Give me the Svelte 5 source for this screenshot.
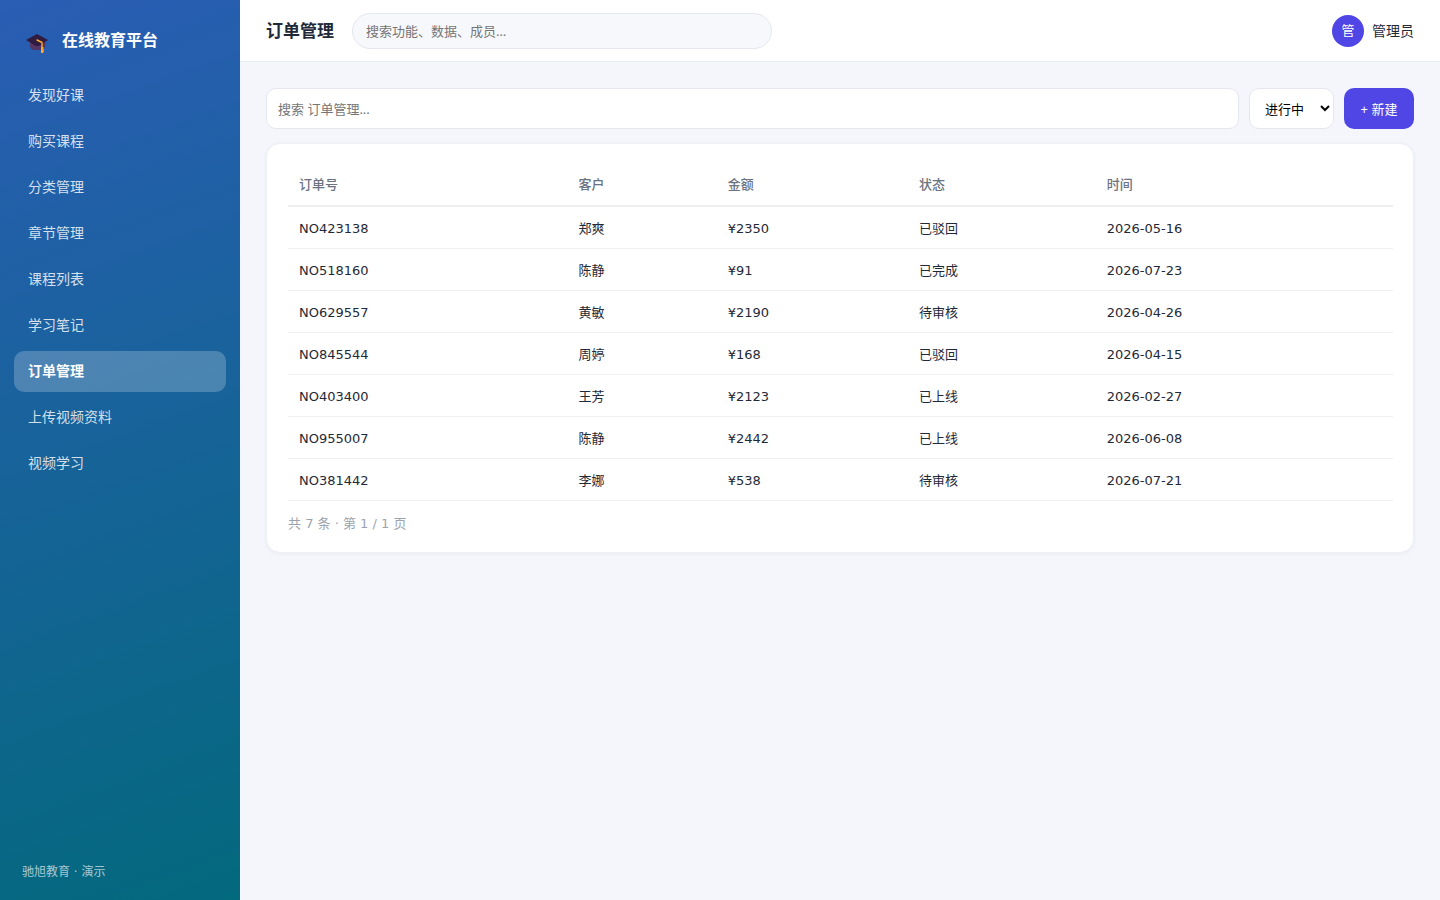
<script>
  const menu = ['发现好课', '购买课程', '分类管理', '章节管理', '课程列表', '学习笔记', '订单管理', '上传视频资料', '视频学习'];
  const active = '订单管理';
  const columns = ['订单号', '客户', '金额', '状态', '时间'];
  const orders = [
    ['NO423138', '郑爽', '¥2350', '已驳回', '2026-05-16'],
    ['NO518160', '陈静', '¥91', '已完成', '2026-07-23'],
    ['NO629557', '黄敏', '¥2190', '待审核', '2026-04-26'],
    ['NO845544', '周婷', '¥168', '已驳回', '2026-04-15'],
    ['NO403400', '王芳', '¥2123', '已上线', '2026-02-27'],
    ['NO955007', '陈静', '¥2442', '已上线', '2026-06-08'],
    ['NO381442', '李娜', '¥538', '待审核', '2026-07-21']
  ];
</script>

<div class="layout">
  <aside class="sidebar">
    <div class="brand">
      <svg class="logo" viewBox="0 0 24 24" aria-hidden="true">
        <path d="M4 11v5q0 3 4 4h7q4-1 4-4v-5z" fill="#533566" />
        <path d="M0 10 11 4l11 6-9 6h-3z" fill="#2f1c40" />
        <path d="M11 10l5 2.500V18" fill="none" stroke="#fbab2c" stroke-width="1.400" stroke-linejoin="round" stroke-linecap="round" />
        <path d="M15 17h2.500v3l.5 1-1 2h-2z" fill="#fbab2c" />
      </svg>
      <span>在线教育平台</span>
    </div>
    <nav>
      {#each menu as item}
        <a href="#top" class:active={item === active} aria-current={item === active ? 'page' : undefined}>{item}</a>
      {/each}
    </nav>
    <footer>驰旭教育 · 演示</footer>
  </aside>

  <div class="content">
    <header class="topbar">
      <h1>订单管理</h1>
      <input class="global-search" type="search" aria-label="搜索功能" placeholder="搜索功能、数据、成员…" />
      <div class="user">
        <span class="avatar">管</span>
        <span>管理员</span>
      </div>
    </header>

    <main>
      <div class="toolbar">
        <input type="text" aria-label="搜索订单" placeholder="搜索 订单管理..." />
        <select aria-label="状态">
          <option>进行中</option>
        </select>
        <button type="button">+ 新建</button>
      </div>

      <section class="card">
        <table>
          <colgroup>
            <col class="c-id" /><col class="c-name" /><col class="c-sum" /><col class="c-state" /><col />
          </colgroup>
          <thead>
            <tr>
              {#each columns as column}<th scope="col">{column}</th>{/each}
            </tr>
          </thead>
          <tbody>
            {#each orders as order}
              <tr>
                {#each order as cell}<td>{cell}</td>{/each}
              </tr>
            {/each}
          </tbody>
        </table>
        <p class="pager">共 7 条 · 第 1 / 1 页</p>
      </section>
    </main>
  </div>
</div>

<style>
  :global(body) {
    margin: 0;
    background: #f5f6fb;
  }
  .layout {
    display: flex;
    min-height: 100vh;
    color: #1f2937;
    font: 14px/20px "DejaVu Sans", "Noto Sans CJK SC", sans-serif;
  }
  .layout * {
    box-sizing: border-box;
  }
  .sidebar {
    display: flex;
    flex-direction: column;
    flex: 0 0 240px;
    padding: 21px 14px 19px;
    color: #fff;
    background: linear-gradient(160deg, #2a5db4, #03697d);
  }
  .brand {
    display: flex;
    align-items: center;
    gap: 12px;
    height: 40px;
    margin-bottom: 14px;
    padding-left: 12px;
    font-size: 16px;
    font-weight: 700;
  }
  .logo {
    width: 24px;
    height: 24px;
    margin-top: 2px;
  }
  nav {
    display: flex;
    flex-direction: column;
    gap: 5px;
  }
  nav a {
    padding: 10px 14px;
    border-radius: 10px;
    color: rgba(255, 255, 255, 0.82);
    line-height: 21px;
    text-decoration: none;
  }
  nav a.active {
    color: #fff;
    font-weight: 700;
    background: rgba(255, 255, 255, 0.22);
  }
  .sidebar footer {
    margin-top: auto;
    padding-left: 8px;
    color: rgba(255, 255, 255, 0.65);
    font-size: 12px;
    line-height: 18px;
  }
  .content {
    flex: 1;
    min-width: 0;
  }
  .topbar {
    display: flex;
    align-items: center;
    gap: 18px;
    height: 62px;
    padding: 0 26px;
    border-bottom: 1px solid #eceef4;
    background: #fff;
  }
  h1 {
    margin: 0;
    font-size: 17px;
    line-height: 24px;
  }
  input,
  select,
  button {
    margin: 0;
    font: 13px/20px "Noto Sans", "Noto Sans CJK SC", sans-serif;
  }
  input::placeholder {
    color: #757575;
  }
  .global-search {
    flex: 0 1 420px;
    min-width: 0;
    height: 36px;
    padding: 0 13px;
    border: 1px solid #e5e7ef;
    border-radius: 18px;
    background: #f7f8fc;
    appearance: none;
  }
  .user {
    display: flex;
    align-items: center;
    gap: 8px;
    margin-left: auto;
  }
  .avatar {
    width: 32px;
    height: 32px;
    border-radius: 50%;
    color: #fff;
    background: #4f46e5;
    font-size: 13px;
    line-height: 32px;
    text-align: center;
  }
  main {
    padding: 26px;
  }
  .toolbar {
    display: flex;
    gap: 10px;
    height: 41px;
    margin-bottom: 14px;
  }
  .toolbar input {
    flex: 1;
    min-width: 0;
    padding: 0 11px;
    border: 1px solid #e5e7ef;
    border-radius: 10px;
    background: #fff;
  }
  .toolbar select {
    width: 85px;
    padding: 0 0 0 11px;
    border: 1px solid #e5e7ef;
    border-radius: 10px;
    color: #000;
    background: #fff;
  }
  .toolbar button {
    width: 70px;
    padding: 0;
    border: 0;
    border-radius: 10px;
    color: #fff;
    background: #4f46e5;
  }
  .card {
    padding: 21px 20px 18px 21px;
    border: 1px solid #eef0f5;
    border-radius: 14px;
    background: #fff;
    box-shadow: 0 1px 4px rgba(30, 41, 90, 0.05);
  }
  table {
    width: 100%;
    border-collapse: separate;
    border-spacing: 0;
    table-layout: fixed;
    font-size: 13px;
  }
  .c-id {
    width: 25.300%;
  }
  .c-name {
    width: 13.500%;
  }
  .c-sum {
    width: 17.300%;
  }
  .c-state {
    width: 17%;
  }
  th,
  td {
    height: 42px;
    padding: 2px 11px 0;
    border-bottom: 1px solid #eeeff3;
    text-align: left;
  }
  th {
    padding-top: 0;
    border-bottom-width: 2px;
    color: #6b7280;
    font-weight: 500;
  }
  .pager {
    margin: 13px 0 0;
    color: #9ca3af;
    font-size: 13px;
  }
</style>
